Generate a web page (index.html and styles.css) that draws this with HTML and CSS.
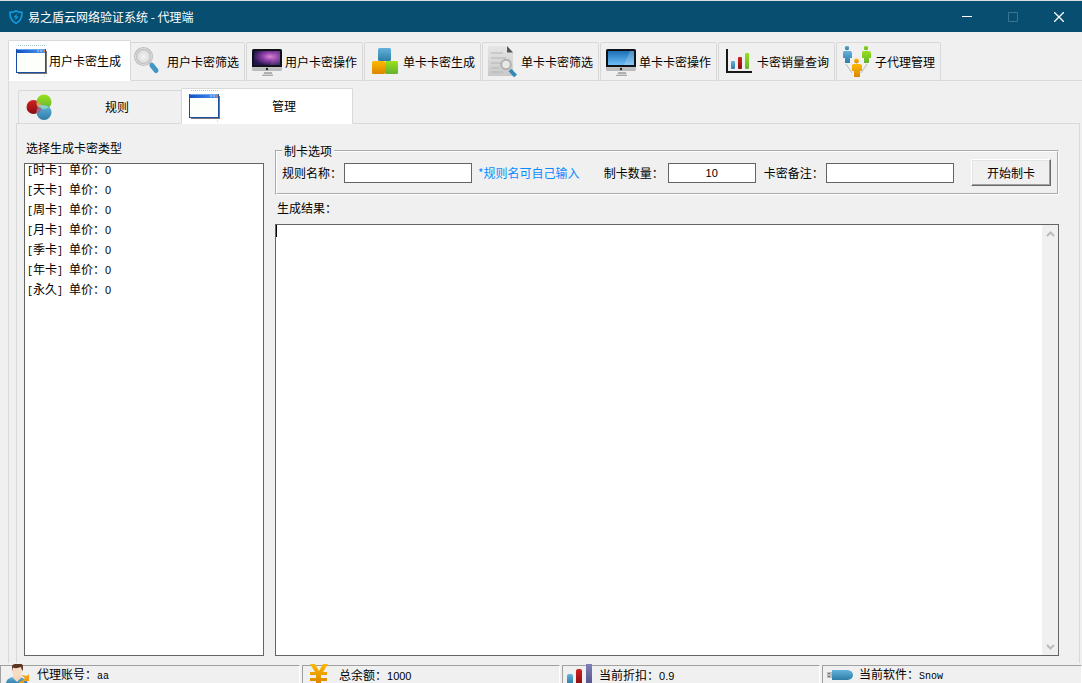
FILE: index.html
```html
<!DOCTYPE html>
<html lang="zh-CN">
<head>
<meta charset="utf-8">
<title>易之盾云网络验证系统 - 代理端</title>
<link rel="stylesheet" href="styles.css">
</head>
<body>
<svg class="defs" width="0" height="0" aria-hidden="true">
  <defs>
    <linearGradient id="blue" x1="0" y1="0" x2="0" y2="1"><stop offset="0" stop-color="#62b2dc"/><stop offset="1" stop-color="#2d7da6"/></linearGradient>
    <linearGradient id="green" x1="0" y1="0" x2="0" y2="1"><stop offset="0" stop-color="#99e11c"/><stop offset="1" stop-color="#63b132"/></linearGradient>
    <linearGradient id="orange" x1="0" y1="0" x2="0" y2="1"><stop offset="0" stop-color="#fcba00"/><stop offset="1" stop-color="#dc8500"/></linearGradient>
    <linearGradient id="red" x1="0" y1="0" x2="0" y2="1"><stop offset="0" stop-color="#cf2222"/><stop offset="1" stop-color="#8c0c10"/></linearGradient>
    <linearGradient id="violet" x1="0" y1="0" x2="0" y2="1"><stop offset="0" stop-color="#8080b8"/><stop offset="1" stop-color="#56568c"/></linearGradient>
    <linearGradient id="silver" x1="0" y1="0" x2="0" y2="1"><stop offset="0" stop-color="#f4f4f4"/><stop offset="1" stop-color="#b9b9b9"/></linearGradient>
    <linearGradient id="sky" x1="0" y1="0" x2="0" y2="1"><stop offset="0" stop-color="#1c70b4"/><stop offset="1" stop-color="#6cbcf6"/></linearGradient>
    <linearGradient id="bar" x1="0" y1="0" x2="1" y2="0"><stop offset="0" stop-color="#1352c8"/><stop offset="1" stop-color="#4a98f0"/></linearGradient>
    <linearGradient id="paper" x1="0" y1="0" x2="0" y2="1"><stop offset="0" stop-color="#e6e6e6"/><stop offset="1" stop-color="#c9c9c9"/></linearGradient>
    <radialGradient id="nebula" cx=".62" cy=".4" r=".65"><stop offset="0" stop-color="#dc86d4"/><stop offset=".45" stop-color="#8d3fa4"/><stop offset="1" stop-color="#241550"/></radialGradient>
    <radialGradient id="lens"><stop offset="0" stop-color="#f4f4f4"/><stop offset="1" stop-color="#d4d6d8"/></radialGradient>
    <symbol id="i-window" viewBox="0 0 32 32">
      <path d="M2 .5H30M28.500 30.500V31.500" stroke="#a6c8c8" stroke-dasharray="1 1"/>
      <path d="M2 6H31V29H2z" fill="#777"/>
      <path d="M0 4H30V28H0z" fill="#1b4ea0"/>
      <path d="M1 4H29V8H1z" fill="url(#bar)"/>
      <path d="M1 4.500H29" stroke="#6ba8f0"/>
      <path d="M21 5.500h2v1h-2zM24 5.500h2v1h-2z" fill="#b9dcff"/><path d="M27 5h2v2h-2z" fill="#f07038"/>
      <path d="M1 8H29V27H1z" fill="#fdfffa"/>
    </symbol>
    <symbol id="i-search" viewBox="0 0 32 32">
      <path d="M15 16L20 21" stroke="#b9b9b9" stroke-width="3"/>
      <path d="M18 19.500L22 24.500" stroke="#3f97c4" stroke-width="5" stroke-linecap="round"/>
      <circle cx="9.500" cy="10.500" r="8" fill="url(#lens)" stroke="#bdbdbd" stroke-width="3"/>
      <circle cx="9.500" cy="10.500" r="8" fill="none" stroke="#e2e2e2" stroke-width="1"/>
    </symbol>
    <symbol id="i-stand" viewBox="0 0 32 32">
      <path d="M12 26H20L21 29H11z" fill="#d2d2d2"/><path d="M12 27H20" stroke="#8e8e8e"/><path d="M10 29.500H21" stroke="#aaa" stroke-width="1"/>
      <rect x="0" y="3" width="30" height="22" rx="1.500" fill="url(#silver)"/>
      <path d="M0 21V4.500Q0 3 1.500 3H28.500Q30 3 30 4.500V21z" fill="#111217"/>
      <circle cx="15" cy="23" r="1.200" fill="#222"/>
    </symbol>
    <symbol id="i-mac-nebula" viewBox="0 0 32 32">
      <use href="#i-stand"/><path d="M2 5H28V19H2z" fill="url(#nebula)"/><path d="M18 19L23 5H28V19z" fill="#d0a0e0" opacity=".15"/>
    </symbol>
    <symbol id="i-mac-blue" viewBox="0 0 32 32">
      <use href="#i-stand"/><path d="M2 5H28V19H2z" fill="url(#sky)"/><path d="M18 19L24 5H28V19z" fill="#fff" opacity=".2"/>
    </symbol>
    <symbol id="i-cubes" viewBox="0 0 32 32">
      <rect x="8" y="2" width="13" height="13" rx="1.500" fill="url(#blue)"/>
      <rect x="2" y="15" width="13" height="13" rx="1.500" fill="url(#orange)"/>
      <rect x="15" y="15" width="13" height="13" rx="1.500" fill="url(#green)"/>
    </symbol>
    <symbol id="i-doc" viewBox="0 0 32 32">
      <path d="M0 0H19L25 6V30H0z" fill="url(#paper)"/>
      <path d="M19 0L25 6.500H19z" fill="#555"/>
      <path d="M3 7H15M3 12H18M3 17H13M3 22H11M3 26H15" stroke="#b4b4b4"/>
      <circle cx="18" cy="18.500" r="4.800" fill="#e8e8e8" stroke="#b0b0b0" stroke-width="2"/>
      <path d="M22 24L27.500 30" stroke="#3189b8" stroke-width="4"/>
    </symbol>
    <symbol id="i-chart" viewBox="0 0 32 32">
      <path d="M3 3V26H28" fill="none" stroke="#171717" stroke-width="2"/>
      <rect x="7" y="15" width="4" height="8" rx="1" fill="url(#blue)"/>
      <rect x="14" y="11" width="4" height="12" rx="1" fill="url(#red)"/>
      <rect x="21" y="7" width="4" height="16" rx="1" fill="url(#green)"/>
    </symbol>
    <symbol id="i-people" viewBox="0 0 32 32">
      <path d="M4 18L10 27M25 18L19 27" stroke="#bbb"/>
      <g fill="url(#blue)"><circle cx="5" cy="2" r="2.200"/><path d="M2 5H8Q10 5 10 7V12H8V17H3V12H1V7Q1 5 2 5z"/></g>
      <g fill="url(#green)"><circle cx="24" cy="2" r="2.200"/><path d="M21 5H27Q29 5 29 7V12H27V17H22V12H20V7Q20 5 21 5z"/></g>
      <g fill="url(#orange)"><circle cx="14.500" cy="15" r="2.400"/><path d="M11 18H18Q20 18 20 20V25H18V31H12V25H10V20Q10 18 11 18z"/></g>
    </symbol>
    <symbol id="i-circles" viewBox="0 0 32 32">
      <circle cx="7.500" cy="16" r="7" fill="url(#red)"/>
      <circle cx="18" cy="11" r="7.500" fill="url(#green)"/>
      <circle cx="18" cy="21.500" r="7.500" fill="url(#blue)"/>
      <path d="M10.500 12.500Q11 18 15 16Q16 13.500 14 12Q12.500 10.500 10.500 12.500z" fill="#dc9a60"/>
      <path d="M12 15Q17 12.500 23 16Q17 20.500 12 15z" fill="#87d5be"/>
      <path d="M10.500 19Q12 15 15 17Q15 22 12 22Z" fill="#9a6590"/>
    </symbol>
  </defs>
</svg>

<div class="window">
  <header class="titlebar">
    <svg class="shield" viewBox="0 0 14 14"><path d="M7 .8Q9.500 2.300 13 2.200Q13.300 10 7 13.300Q.7 10 1 2.200Q4.500 2.300 7 .8z" fill="none" stroke="#12a0e8" stroke-width="1.500"/><path d="M8 3.500L4.500 7.500H6.800L6 10.500L9.600 6.500H7.300z" fill="#12a0e8"/></svg>
    <h1 class="title">易之盾云网络验证系统 - 代理端</h1>
    <div class="controls">
      <button class="control" aria-label="最小化"><svg viewBox="0 0 10 10"><path d="M0 4.500H10" stroke="#fff"/></svg></button>
      <button class="control" aria-label="最大化" disabled><svg viewBox="0 0 10 10"><path d="M.5.500H9.500V9.500H.5z" fill="none" stroke="#3b7590"/></svg></button>
      <button class="control" aria-label="关闭"><svg viewBox="0 0 10 10"><path d="M0 0L10 10M10 0L0 10" stroke="#fff" stroke-width="1.300"/></svg></button>
    </div>
  </header>

  <main class="main">
    <nav class="tabs" role="tablist">
      <button class="tab active" role="tab" aria-selected="true"><svg class="icon"><use href="#i-window"/></svg>用户卡密生成</button>
      <button class="tab after-active" role="tab"><svg class="icon"><use href="#i-search"/></svg>用户卡密筛选</button>
      <button class="tab" role="tab"><svg class="icon"><use href="#i-mac-nebula"/></svg>用户卡密操作</button>
      <button class="tab" role="tab"><svg class="icon"><use href="#i-cubes"/></svg>单卡卡密生成</button>
      <button class="tab" role="tab"><svg class="icon"><use href="#i-doc"/></svg>单卡卡密筛选</button>
      <button class="tab" role="tab"><svg class="icon"><use href="#i-mac-blue"/></svg>单卡卡密操作</button>
      <button class="tab" role="tab"><svg class="icon"><use href="#i-chart"/></svg>卡密销量查询</button>
      <button class="tab" role="tab"><svg class="icon"><use href="#i-people"/></svg>子代理管理</button>
    </nav>

    <section class="panel outer">
      <nav class="subtabs" role="tablist">
        <button class="subtab" role="tab"><svg class="icon"><use href="#i-circles"/></svg><span class="subtab-text">规则</span></button>
        <button class="subtab active" role="tab" aria-selected="true"><svg class="icon"><use href="#i-window"/></svg><span class="subtab-text">管理</span></button>
      </nav>

      <div class="panel inner">
        <div class="types">
          <div class="caption" id="types-label">选择生成卡密类型</div>
          <ul class="listbox" role="listbox" aria-labelledby="types-label">
            <li role="option"><span class="half">[</span>时卡<span class="half">] </span>单价：<span class="num">0</span></li>
            <li role="option"><span class="half">[</span>天卡<span class="half">] </span>单价：<span class="num">0</span></li>
            <li role="option"><span class="half">[</span>周卡<span class="half">] </span>单价：<span class="num">0</span></li>
            <li role="option"><span class="half">[</span>月卡<span class="half">] </span>单价：<span class="num">0</span></li>
            <li role="option"><span class="half">[</span>季卡<span class="half">] </span>单价：<span class="num">0</span></li>
            <li role="option"><span class="half">[</span>年卡<span class="half">] </span>单价：<span class="num">0</span></li>
            <li role="option"><span class="half">[</span>永久<span class="half">] </span>单价：<span class="num">0</span></li>
          </ul>
        </div>

        <div class="work">
          <fieldset class="options">
            <legend>制卡选项</legend>
            <div class="row">
              <div class="field rule"><label for="rule">规则名称：</label><input id="rule" type="text"><span class="hint">*规则名可自己输入</span></div>
              <div class="field amount"><label for="count">制卡数量：</label><input id="count" class="count" type="text" value="10"></div>
              <div class="field"><label for="note">卡密备注：</label><input id="note" type="text"></div>
              <button class="start">开始制卡</button>
            </div>
          </fieldset>
          <label class="caption" for="result">生成结果：</label>
          <div class="result">
            <textarea id="result"></textarea>
            <div class="scrollbar">
              <button aria-label="向上滚动"><svg viewBox="0 0 9 6"><path d="M1 5L4.500 1.500L8 5" fill="none" stroke="#bcbcbc" stroke-width="2"/></svg></button>
              <button aria-label="向下滚动"><svg viewBox="0 0 9 6"><path d="M1 1L4.500 4.500L8 1" fill="none" stroke="#bcbcbc" stroke-width="2"/></svg></button>
            </div>
          </div>
        </div>
      </div>
    </section>
  </main>

  <footer class="status">
    <div class="cell">
      <svg class="status-icon" viewBox="0 0 32 20"><path d="M5 20Q5 14 12 13H18Q26 14 27 20z" fill="url(#blue)"/><path d="M12 11H20V14L16 18L12 14z" fill="#f3d5b8"/><ellipse cx="16" cy="7" rx="5" ry="6.500" fill="#f6dcc4"/><path d="M11 7V2Q12 0 14 0H20Q22 0 22 3V7Q20 5 20 3Q15 5 12 3.500z" fill="#5b3421"/><path d="M20 11L26 12L28 10V17H21L24 14zM18 18L23 16V20H18z" fill="#f0a010"/></svg>
      <span>代理账号：<span class="half">aa</span></span>
    </div>
    <div class="cell">
      <svg class="status-icon" viewBox="0 0 32 20"><path d="M7 0H12L16 7L20 0H25L20 8H24V11H18V14H24V17H18V20H13V17H7V14H13V11H7V8H12z" fill="url(#orange)"/></svg>
      <span>总余额：<span class="num">1000</span></span>
    </div>
    <div class="cell">
      <svg class="status-icon" viewBox="0 0 32 20"><path d="M4 20V12Q4 10 6 10H8Q10 10 10 12V20z" fill="url(#blue)"/><path d="M13 20V7Q13 5 15 5H17Q19 5 19 7V20z" fill="url(#red)"/><path d="M23 0H29V20H23z" fill="url(#violet)"/></svg>
      <span>当前折扣：<span class="num">0.9</span></span>
    </div>
    <div class="cell">
      <svg class="status-icon" viewBox="0 0 32 20"><path d="M4 8H10V14H4z" fill="#bbb"/><path d="M5 9h2v1H5zM5 12h2v1H5z" fill="#777"/><path d="M9 6H25Q30 7 30 11Q30 15 25 16H9z" fill="url(#blue)"/></svg>
      <span>当前软件：<span class="half">Snow</span></span>
    </div>
  </footer>
</div>
</body>
</html>
```

FILE: styles.css
```css
* { box-sizing: border-box; }

body {
  margin: 0;
  background: #f0f0f0;
  color: #000;
  font: 12px/16px "Noto Sans CJK SC", sans-serif;
}

button, input, textarea { font: inherit; color: inherit; margin: 0; }

.defs { position: absolute; }

.window {
  display: flex;
  flex-direction: column;
  height: 100vh;
  overflow: hidden;
}

.half { font-family: "Liberation Mono", monospace; font-size: 10px; white-space: pre; }
.num { font-family: "Liberation Sans", sans-serif; font-size: 11px; }

/* Title bar */
.titlebar {
  display: flex;
  align-items: center;
  flex: none;
  height: 32px;
  padding-left: 9px;
  background: #074e70;
  border-top: 1px solid #d9dee0;
  color: #fff;
}
.shield { width: 14px; height: 14px; margin-right: 5px; }
.title { margin: 0; font-size: 12px; font-weight: 400; }
.controls { display: flex; margin-left: auto; height: 100%; }
.control {
  display: grid;
  place-items: center;
  width: 46px;
  padding: 0;
  border: 0;
  background: none;
}
.control svg { width: 10px; height: 10px; }

/* Tabs */
.main { display: flex; flex-direction: column; flex: 1; min-height: 0; padding-top: 8px; }
.icon { flex: none; width: 32px; height: 32px; }

.tabs, .subtabs {
  display: flex;
  align-items: flex-end;
  position: relative;
  margin-bottom: -1px;
}
.tabs { gap: 1px; padding-left: 8px; }
.tab, .subtab {
  display: flex;
  align-items: center;
  border: 1px solid #d9d9d9;
  border-radius: 2px 2px 0 0;
  background: #f0f0f0;
  white-space: nowrap;
}
.tab { gap: 1px; height: 39px; padding: 0 5px; }
.tab.active { height: 41px; padding: 0 9px 0 7px; }
.tab.after-active { margin-left: -4px; }
.tab.active, .subtab.active {
  z-index: 1;
  background: #fff;
  border-bottom-color: #fff;
}
.subtabs { padding-left: 2px; }
.subtab { width: 164px; height: 34px; padding: 0 5px 0 7px; }
.subtab.active { width: 172px; height: 36px; margin-left: -1px; }
.subtab-text { flex: 1; text-align: center; }

.panel { display: flex; flex: 1; min-height: 0; border: 1px solid #d9d9d9; border-bottom: 0; }
.outer { flex-direction: column; margin-left: 8px; padding: 7px 2px 0 7px; border-right: 0; }
.inner { gap: 11px; padding: 15px 20px 7px 7px; }

/* Card types */
.types, .work { display: flex; flex-direction: column; }
.types { flex: none; width: 240px; gap: 6px; }
.caption { padding-left: 2px; line-height: 18px; }
.listbox {
  display: flex;
  flex-direction: column;
  flex: 1;
  gap: 10px;
  margin: 0;
  padding: 0 2px;
  border: 1px solid #646464;
  background: #fff;
  line-height: 10px;
  list-style: none;
}
.listbox li { height: 10px; }

/* Options */
.work { flex: 1; min-width: 0; padding-top: 4px; }
.options {
  min-width: 0;
  margin: 0 0 4px;
  padding: 0 6px 7px 5px;
  border: 2px groove #fff;
}
.options legend { padding: 0 2px; line-height: 16px; }
.row { display: flex; align-items: center; gap: 8px; white-space: nowrap; }
.field { display: flex; align-items: center; gap: 2px; }
.field input {
  width: 128px;
  height: 20px;
  padding: 0 2px;
  border: 1px solid #646464;
  background: #fff;
}
.field .count {
  width: 88px;
  font-family: "Liberation Sans", sans-serif;
  font-size: 11px;
  text-align: center;
}
.rule { margin-right: 16px; }
.amount { gap: 4px; }
.hint { margin-left: 4px; color: #0a8cff; }
.start {
  width: 80px;
  height: 27px;
  margin-left: auto;
  padding: 0;
  border: 1px solid;
  border-color: #fff #696969 #696969 #fff;
  background: #f0f0f0;
  box-shadow: inset -1px -1px #a0a0a0, inset 1px 1px #e3e3e3;
}

/* Result box */
.result {
  display: flex;
  flex: 1;
  min-height: 0;
  margin-top: 7px;
  border: 1px solid #646464;
  background: #fff;
}
.result textarea {
  flex: 1;
  min-width: 0;
  padding: 0 2px;
  border: 0;
  outline: 0;
  resize: none;
  background: linear-gradient(#000, #000) 0 0 / 1px 12px no-repeat;
}
.scrollbar {
  display: flex;
  flex-direction: column;
  justify-content: space-between;
  width: 16px;
  background: #f0f0f0;
}
.scrollbar button {
  display: grid;
  place-items: center;
  height: 17px;
  padding: 0;
  border: 0;
  background: none;
}
.scrollbar svg { width: 9px; height: 6px; }

/* Status bar */
.status {
  display: grid;
  grid-template-columns: 300fr 258fr 258fr 260fr;
  gap: 2px;
  flex: none;
  height: 20px;
  padding-top: 2px;
}
.cell {
  display: flex;
  align-items: center;
  gap: 4px;
  border: 1px solid;
  border-color: #a0a0a0 #fff #fff #a0a0a0;
}
.status-icon { flex: none; width: 32px; height: 20px; margin-top: -3px; }
```
